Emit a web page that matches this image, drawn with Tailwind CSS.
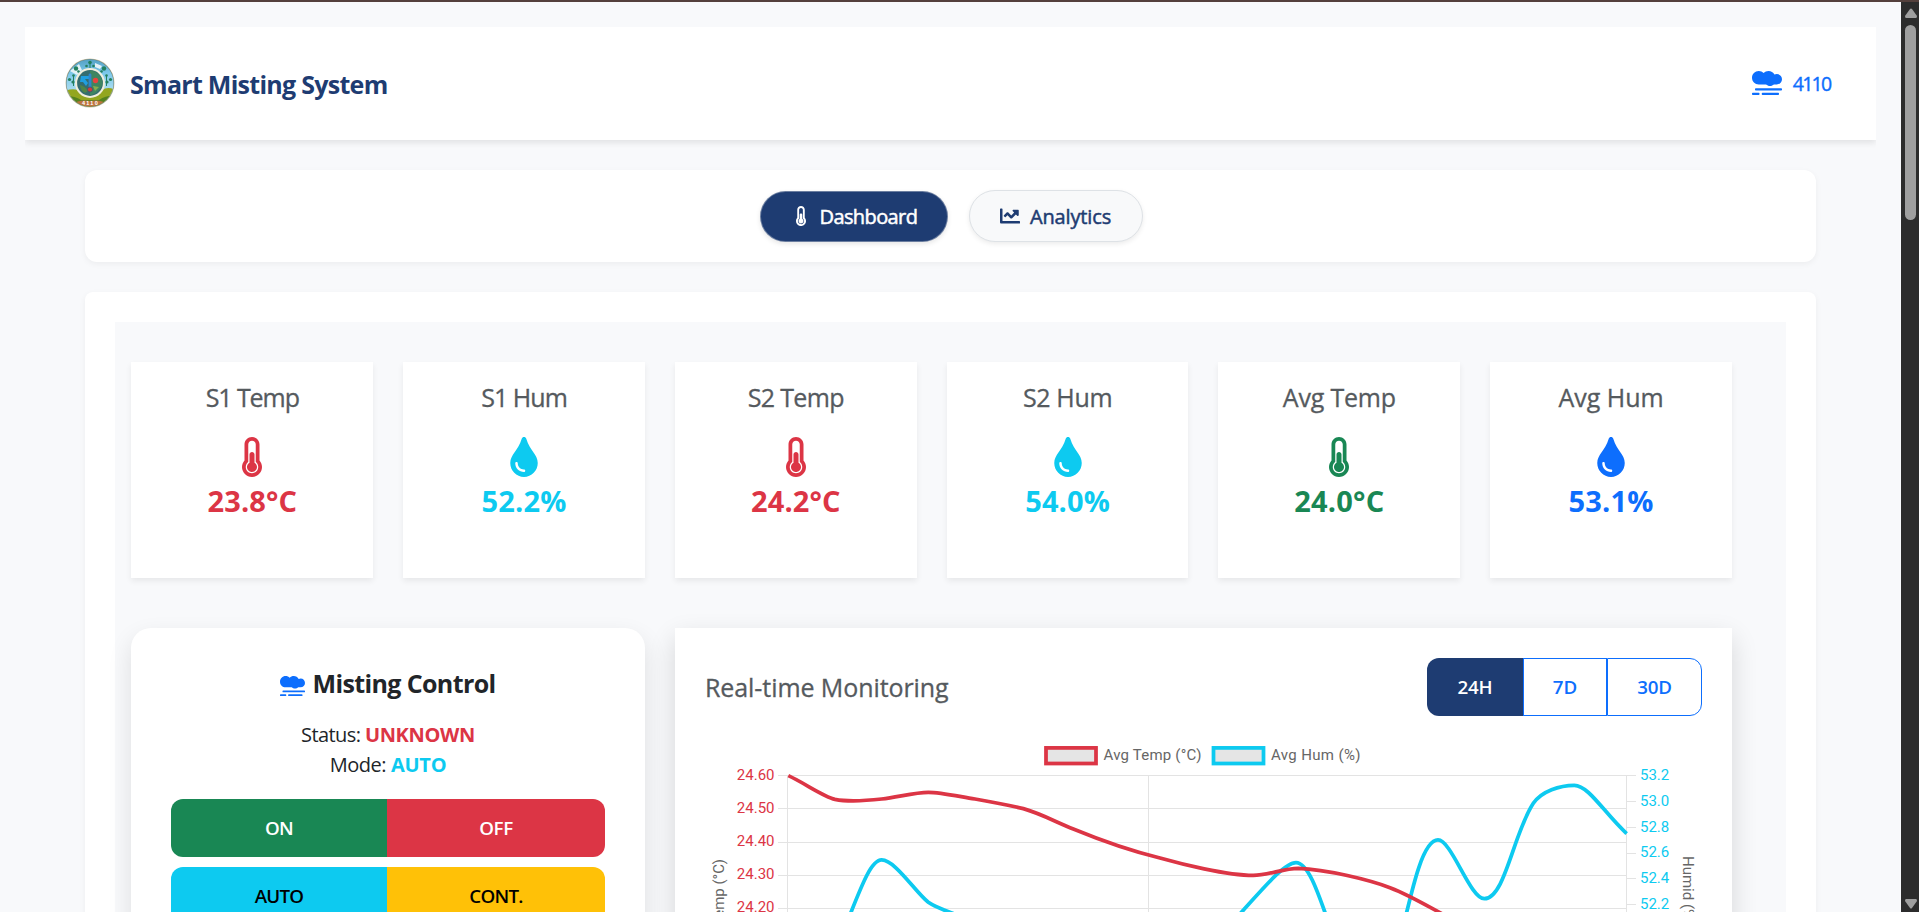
<!DOCTYPE html>
<html lang="en">
<head>
<meta charset="utf-8">
<title>Smart Misting System</title>
<script src="https://cdn.jsdelivr.net/npm/@tailwindcss/browser@4"></script>
</head>
<body class="h-[912px] overflow-hidden flex flex-col bg-[#f8f9fb] font-['Open_Sans','Noto_Sans',sans-serif] text-[#212529]">
<svg width="0" height="0" class="hidden">
  <symbol id="smog" viewBox="0 0 640 512"><path fill="currentColor" d="M624 368H80c-8.8 0-16 7.2-16 16v16c0 8.8 7.2 16 16 16h544c8.800 0 16-7.200 16-16v-16c0-8.800-7.200-16-16-16zm-480 96H16c-8.800 0-16 7.200-16 16v16c0 8.800 7.200 16 16 16h128c8.800 0 16-7.200 16-16v-16c0-8.800-7.200-16-16-16zm416 0H224c-8.800 0-16 7.200-16 16v16c0 8.800 7.200 16 16 16h336c8.800 0 16-7.200 16-16v-16c0-8.800-7.200-16-16-16zM144 288h156.100c22.500 19.700 51.600 32 83.900 32s61.300-12.300 83.900-32H528c61.900 0 112-50.100 112-112S589.900 64 528 64c-18 0-34.700 4.600-49.700 12.100C454 31 406.800 0 352 0c-41 0-77.800 17.300-104 44.800C221.800 17.300 185 0 144 0 64.500 0 0 64.500 0 144s64.500 144 144 144z"/></symbol>
  <symbol id="thermo" viewBox="0 0 256 512"><path fill="currentColor" d="M192 384c0 35.346-28.654 64-64 64s-64-28.654-64-64c0-23.685 12.876-44.349 32-55.417V224c0-17.673 14.327-32 32-32s32 14.327 32 32v104.583c19.124 11.068 32 31.732 32 55.417zm32-84.653c19.912 22.563 32 52.194 32 84.653 0 70.696-57.303 128-128 128-.299 0-.609-.001-.909-.003C56.789 511.509-.357 453.636.002 383.333.166 351.135 12.224 321.755 32 299.347V96c0-53.019 42.981-96 96-96s96 42.981 96 96v203.347zM208 384c0-34.339-19.370-52.190-32-66.502V96c0-26.467-21.533-48-48-48S80 69.533 80 96v221.498c-12.732 14.428-31.825 32.100-31.999 66.080-.224 43.876 35.563 80.116 79.423 80.420L128 464c44.112 0 80-35.888 80-80z"/></symbol>
  <symbol id="tint" viewBox="0 0 352 512"><path fill="currentColor" d="M205.220 22.090c-7.940-28.780-49.440-30.120-58.440 0C100.010 179.850 0 222.720 0 333.910 0 432.350 78.720 512 176 512s176-79.650 176-178.090c0-111.750-99.790-153.340-146.780-311.820zM176 448c-61.750 0-112-50.250-112-112 0-8.840 7.160-16 16-16s16 7.160 16 16c0 44.110 35.890 80 80 80 8.840 0 16 7.160 16 16s-7.160 16-16 16z"/></symbol>
  <symbol id="chartline" viewBox="0 0 512 512"><path fill="currentColor" d="M496 384H64V80c0-8.840-7.160-16-16-16H16C7.160 64 0 71.160 0 80v336c0 17.670 14.330 32 32 32h464c8.840 0 16-7.160 16-16v-32c0-8.840-7.160-16-16-16zM464 96H345.940c-21.380 0-32.090 25.850-16.970 40.970l32.400 32.400L288 242.750l-73.370-73.370c-12.500-12.500-32.760-12.500-45.250 0l-68.690 68.690c-6.250 6.250-6.250 16.380 0 22.630l22.620 22.620c6.250 6.250 16.380 6.250 22.630 0L192 237.250l73.370 73.370c12.500 12.500 32.760 12.500 45.250 0l96-96 32.400 32.400c15.120 15.120 40.970 4.410 40.970-16.970V112c.01-8.840-7.150-16-15.990-16z"/></symbol>
</svg>
<div class="h-[2px] shrink-0 bg-[#54403c]"></div>
<div class="flex flex-1 min-h-0">
  <div class="w-[1901px] shrink-0 px-[25px] pt-[25px] overflow-hidden">

    <header class="h-[113px] bg-white flex items-center pl-10 pr-[45.500px] shadow-[0_3px_6px_rgba(0,0,0,0.09)] [clip-path:inset(0_0_-20px_0)]">
      <svg class="w-[50px] h-[50px] -mt-0.5" viewBox="0 0 50 50">
        <defs>
          <clipPath id="lc"><circle cx="25" cy="25" r="23.500"/></clipPath>
          <linearGradient id="sky" x1="0" y1="0" x2="0" y2="1"><stop offset="0" stop-color="#4f9cc0"/><stop offset=".3" stop-color="#7cc8ea"/><stop offset=".65" stop-color="#a9dcf0"/></linearGradient>
        </defs>
        <circle cx="25" cy="25" r="24.500" fill="#cfc8a8"/>
        <circle cx="25" cy="25" r="24" fill="#6d8583"/>
        <g clip-path="url(#lc)">
          <rect width="50" height="50" fill="url(#sky)"/>
          <path d="M5 13l9-7 3 6-5 5zM30 5l7 3-2 3-5-2z" fill="#e4f1f6"/>
          <path d="M0 33q7-3 13-1l24 0q6-4 13 0v18H0z" fill="#93a61f"/>
          <path d="M0 38q10 0 16 4h18q8-5 16-4v12H0z" fill="#55821f"/>
          <path d="M7 46q8-5 18-3 10-2 18 3v4H7z" fill="#bd7440"/>
          <g fill="#23805f">
            <circle cx="25" cy="4.500" r="1.800"/><circle cx="21.500" cy="8" r="1.300"/><circle cx="28.500" cy="8" r="1.300"/><path d="M24.500 4h1v6h-1z"/>
            <circle cx="11" cy="10.500" r="2.200"/><circle cx="13.500" cy="13.500" r="1.300"/><circle cx="39" cy="10.500" r="2.200"/><circle cx="36.500" cy="13.500" r="1.300"/>
            <circle cx="8.500" cy="17.500" r="1.300"/><circle cx="4.500" cy="21.500" r="1.600"/><circle cx="8" cy="24" r="1.600"/><path d="M8 17h1v11h-1z"/>
            <circle cx="41.500" cy="17.500" r="1.300"/><circle cx="45.500" cy="21.500" r="1.600"/><circle cx="42" cy="24" r="1.600"/><path d="M41 17h1v11h-1z"/>
          </g>
        </g>
        <circle cx="25" cy="25" r="15" fill="#f1eedc"/>
        <circle cx="25" cy="25" r="12.900" fill="#356d70"/>
        <path d="M25 12.500a12.500 12.500 0 0 1 12.300 14.500q-4 8-12.300 10.500z" fill="#3f8560"/>
        <path d="M16 18h8v3h-4l3 4-2 3-3-4h-3z" fill="#209fe0"/>
        <path d="M15 27q5 1 8 6l-3 2q-5-3-5-8z" fill="#4f8548"/>
        <circle cx="30.500" cy="22.500" r="2.700" fill="#e8433f"/>
        <path d="M28 28l6 1-4 4z" fill="#86ad4c"/>
        <path d="M23.600 17a1.400 1.400 0 0 1 2.800 0v13h-2.800z" fill="#2f86cc"/>
        <circle cx="25" cy="31.500" r="2.500" fill="#d33b3a" stroke="#2e5a78" stroke-width=".8"/>
        <text x="25.500" y="46.500" text-anchor="middle" font-family="Liberation Sans, sans-serif" font-weight="bold" font-size="5.500" letter-spacing="1.300" fill="#fff">4110</text>
      </svg>
      <span class="ml-[15px] pt-[3px] text-[25px] font-bold tracking-[-0.720px] text-[#1e3c72]">Smart Misting System</span>
      <span class="ml-auto flex items-center text-[#0d6efd]">
        <svg class="w-[30px] h-6 -mt-px"><use href="#smog"/></svg>
        <span class="ml-[11px] text-[19.500px] leading-[30px] tracking-[-1.700px] [-webkit-text-stroke:0.4px]">4110</span>
      </span>
    </header>

    <nav class="mt-[30px] mx-[60px] pl-[2px] h-[92px] rounded-xl bg-white flex items-center justify-center gap-[21px] shadow-[0_2px_6px_rgba(0,0,0,0.05)]">
      <a class="w-[188px] h-[51px] rounded-full bg-[#1e3c72] text-white flex items-center pl-[34.500px] border border-[#dee2e6]/40 shadow-[0_2px_5px_rgba(0,0,0,0.1)]">
        <svg class="w-[10px] h-5"><use href="#thermo"/></svg>
        <span class="ml-[14px] pt-0.5 text-[20px] tracking-[-0.600px] [-webkit-text-stroke:0.500px]">Dashboard</span>
      </a>
      <a class="w-[174px] h-[52px] rounded-full bg-[#f8f9fa] text-[#1e3c72] flex items-center pl-[30px] border border-[#dee2e6] shadow-[0_2px_5px_rgba(0,0,0,0.08)]">
        <svg class="w-5 h-5"><use href="#chartline"/></svg>
        <span class="ml-[10px] pt-0.5 text-[20px] tracking-[-0.150px] [-webkit-text-stroke:0.500px]">Analytics</span>
      </a>
    </nav>

    <main class="mt-[30px] mx-[60px] h-[760px] rounded-lg bg-white px-[30px] pt-[30px] shadow-[0_2px_6px_rgba(0,0,0,0.05)]">
      <div class="h-[720px] bg-[#f8f9fb] pt-10 pl-4 pr-[54px]">
        <section class="grid grid-cols-6 gap-[30px] text-center pl-[0.400px]">
          <div class="h-[216px] bg-white pt-5 flex flex-col items-center shadow-[0_3px_6px_rgba(0,0,0,0.07)] text-[#dc3545]">
            <h3 class="text-[25px] leading-[30px] tracking-[-1.080px] text-[#555a5e] [-webkit-text-stroke:0.3px]">S1 Temp</h3>
            <svg class="mt-[25px] w-5 h-10"><use href="#thermo"/></svg>
            <p class="mt-1.5 text-[29px] leading-[35px] font-bold tracking-[0.100px]">23.8°C</p>
          </div>
          <div class="h-[216px] bg-white pt-5 flex flex-col items-center shadow-[0_3px_6px_rgba(0,0,0,0.07)] text-[#0dcaf0]">
            <h3 class="text-[25px] leading-[30px] tracking-[-0.980px] text-[#555a5e] [-webkit-text-stroke:0.3px]">S1 Hum</h3>
            <svg class="mt-[25px] w-7 h-10"><use href="#tint"/></svg>
            <p class="mt-1.5 text-[29px] leading-[35px] font-bold tracking-[0.200px]">52.2%</p>
          </div>
          <div class="h-[216px] bg-white pt-5 flex flex-col items-center shadow-[0_3px_6px_rgba(0,0,0,0.07)] text-[#dc3545]">
            <h3 class="text-[25px] leading-[30px] tracking-[-0.650px] text-[#555a5e] [-webkit-text-stroke:0.3px]">S2 Temp</h3>
            <svg class="mt-[25px] w-5 h-10"><use href="#thermo"/></svg>
            <p class="mt-1.5 text-[29px] leading-[35px] font-bold tracking-[0.100px]">24.2°C</p>
          </div>
          <div class="h-[216px] bg-white pt-5 flex flex-col items-center shadow-[0_3px_6px_rgba(0,0,0,0.07)] text-[#0dcaf0]">
            <h3 class="text-[25px] leading-[30px] tracking-[-0.350px] text-[#555a5e] [-webkit-text-stroke:0.3px]">S2 Hum</h3>
            <svg class="mt-[25px] w-7 h-10"><use href="#tint"/></svg>
            <p class="mt-1.5 text-[29px] leading-[35px] font-bold tracking-[0.100px]">54.0%</p>
          </div>
          <div class="h-[216px] bg-white pt-5 flex flex-col items-center shadow-[0_3px_6px_rgba(0,0,0,0.07)] text-[#198754]">
            <h3 class="text-[25px] leading-[30px] tracking-[-0.200px] text-[#555a5e] [-webkit-text-stroke:0.3px]">Avg Temp</h3>
            <svg class="mt-[25px] w-5 h-10"><use href="#thermo"/></svg>
            <p class="mt-1.5 text-[29px] leading-[35px] font-bold tracking-[0.200px]">24.0°C</p>
          </div>
          <div class="h-[216px] bg-white pt-5 flex flex-col items-center shadow-[0_3px_6px_rgba(0,0,0,0.07)] text-[#0d6efd]">
            <h3 class="text-[25px] leading-[30px] tracking-[0px] text-[#555a5e] [-webkit-text-stroke:0.3px]">Avg Hum</h3>
            <svg class="mt-[25px] w-7 h-10"><use href="#tint"/></svg>
            <p class="mt-1.5 text-[29px] leading-[35px] font-bold tracking-[0.200px]">53.1%</p>
          </div>
        </section>

        <section class="mt-[50px] flex gap-[30px]">
          <div class="w-[514px] shrink-0 h-[400px] rounded-[20px] bg-white px-10 pt-10 text-center shadow-[0_10px_25px_rgba(0,0,0,0.11)]">
            <h2 class="flex justify-center items-center text-[25px] leading-[30px] font-bold tracking-[-0.620px]">
              <svg class="mt-1.5 mr-[7px] w-[25px] h-5 text-[#0d6efd]"><use href="#smog"/></svg>Misting Control
            </h2>
            <p class="mt-[22px] text-[20px] leading-[30px]"><span class="tracking-[-0.600px]">Status: </span><b class="font-bold tracking-[-0.350px] text-[#dc3545]">UNKNOWN</b></p>
            <p class="text-[20px] leading-[30px]"><span class="tracking-[-0.450px]">Mode: </span><b class="font-bold tracking-[-0.230px] text-[#0dcaf0]">AUTO</b></p>
            <div class="mt-[19px] h-[58px] flex rounded-xl overflow-hidden text-[18.750px] font-semibold text-white">
              <button class="w-[216px] bg-[#198754] tracking-[-0.700px]">ON</button>
              <button class="flex-1 bg-[#dc3545] tracking-[-0.420px]">OFF</button>
            </div>
            <div class="mt-[10px] h-[58px] flex rounded-xl overflow-hidden text-[18.750px] font-semibold text-black">
              <button class="w-[216px] bg-[#0dcaf0] tracking-[-0.800px]">AUTO</button>
              <button class="flex-1 bg-[#ffc107] tracking-[-0.700px]">CONT.</button>
            </div>
          </div>

          <div class="flex-1 h-[400px] bg-white px-[30px] pt-[30px] shadow-[0_10px_25px_rgba(0,0,0,0.14)]">
            <div class="flex items-center justify-between">
              <h2 class="text-[25px] leading-[30px] tracking-[-0.080px] text-[#555a5e] [-webkit-text-stroke:0.3px]">Real-time Monitoring</h2>
              <div class="flex h-[58px] text-[18.750px] font-semibold text-[#0d6efd]">
                <button class="w-[96px] rounded-l-xl bg-[#1e3c72] text-white tracking-[-0.100px]">24H</button>
                <button class="w-[84px] border border-[#0d6efd]">7D</button>
                <button class="w-[95px] rounded-r-xl border border-[#0d6efd] tracking-[-0.230px]">30D</button>
              </div>
            </div>
            <svg class="block mt-5 w-[997px] h-[180px]" viewBox="705 736 997 180" font-family="Roboto, Liberation Sans, Arial, sans-serif" font-size="15">
              <g stroke="#e3e3e3" stroke-width="1">
                <path d="M778 775.500H1636M778 808.500H1627M778 842.500H1627M778 875.500H1627M778 908.500H1627M787.500 775V916M1148.500 775V916M1626.500 775V916M1627 801.500h9M1627 827.500h9M1627 853.500h9M1627 878.500h9M1627 904.500h9"/>
              </g>
              <g fill="#e5e5e5" stroke-width="3.750">
                <rect x="1046" y="747.900" width="50" height="15.600" stroke="#dc3545"/>
                <rect x="1213.500" y="747.900" width="50" height="15.600" stroke="#0dcaf0"/>
              </g>
              <g fill="#666">
                <text x="1103.500" y="760" textLength="98">Avg Temp (°C)</text>
                <text x="1271" y="760" textLength="89.500">Avg Hum (%)</text>
                <text transform="translate(724 859) rotate(-90)" text-anchor="end">Temp (°C)</text>
                <text transform="translate(1683 856) rotate(90)">Humid (%)</text>
              </g>
              <g fill="#dc3545" text-anchor="end">
                <text x="774.500" y="780">24.60</text><text x="774.500" y="813">24.50</text><text x="774.500" y="846">24.40</text><text x="774.500" y="879">24.30</text><text x="774.500" y="912">24.20</text>
              </g>
              <g fill="#0dcaf0">
                <text x="1640" y="780">53.2</text><text x="1640" y="806">53.0</text><text x="1640" y="832">52.8</text><text x="1640" y="857">52.6</text><text x="1640" y="883">52.4</text><text x="1640" y="909">52.2</text>
              </g>
              <g transform="translate(660 620) scale(.33333)" fill="none" stroke-width="11.250">
                <path stroke="#0dcaf0" d="M540 960C600 810 630 720 665 720C705 720 765 815 805 847C830 865 860 872 930 900M1700 925C1790 830 1868 728 1908 728C1945 728 1975 820 2010 920M2225 940C2260 790 2290 660 2334 660C2375 660 2430 836 2473 836C2535 836 2560 640 2620 550C2645 513 2700 496 2743 496C2785 496 2830 575 2900 641"/>
                <path stroke="#dc3545" d="M385 467C435 490 490 530 525 538C560 545 620 542 665 537C715 531 765 517 805 517C840 517 890 528 945 537C995 546 1045 555 1090 566C1140 580 1190 607 1240 627C1320 660 1410 692 1500 714C1560 731 1700 766 1780 766C1825 766 1870 745 1915 745C2000 748 2130 780 2190 803C2240 822 2300 855 2370 895"/>
              </g>
            </svg>
          </div>
        </section>
      </div>
    </main>
  </div>

  <div class="w-[18px] shrink-0 bg-[#2c2c2c] flex flex-col items-center pt-1.5 pb-[3px] pl-px">
    <svg class="w-3 h-[10px]" viewBox="0 0 12 10"><path d="M5 1Q6 0 7 1L12 8Q12 10 11 10H1Q0 10 0 8Z" fill="#9f9f9f"/></svg>
    <div class="mt-[7px] w-[11px] h-[195px] rounded-full bg-[#9f9f9f]"></div>
    <svg class="mt-auto w-3 h-[10px]" viewBox="0 0 12 10"><path d="M5 9Q6 10 7 9L12 2Q12 0 11 0H1Q0 0 0 2Z" fill="#9f9f9f"/></svg>
  </div>
</div>
</body>
</html>
